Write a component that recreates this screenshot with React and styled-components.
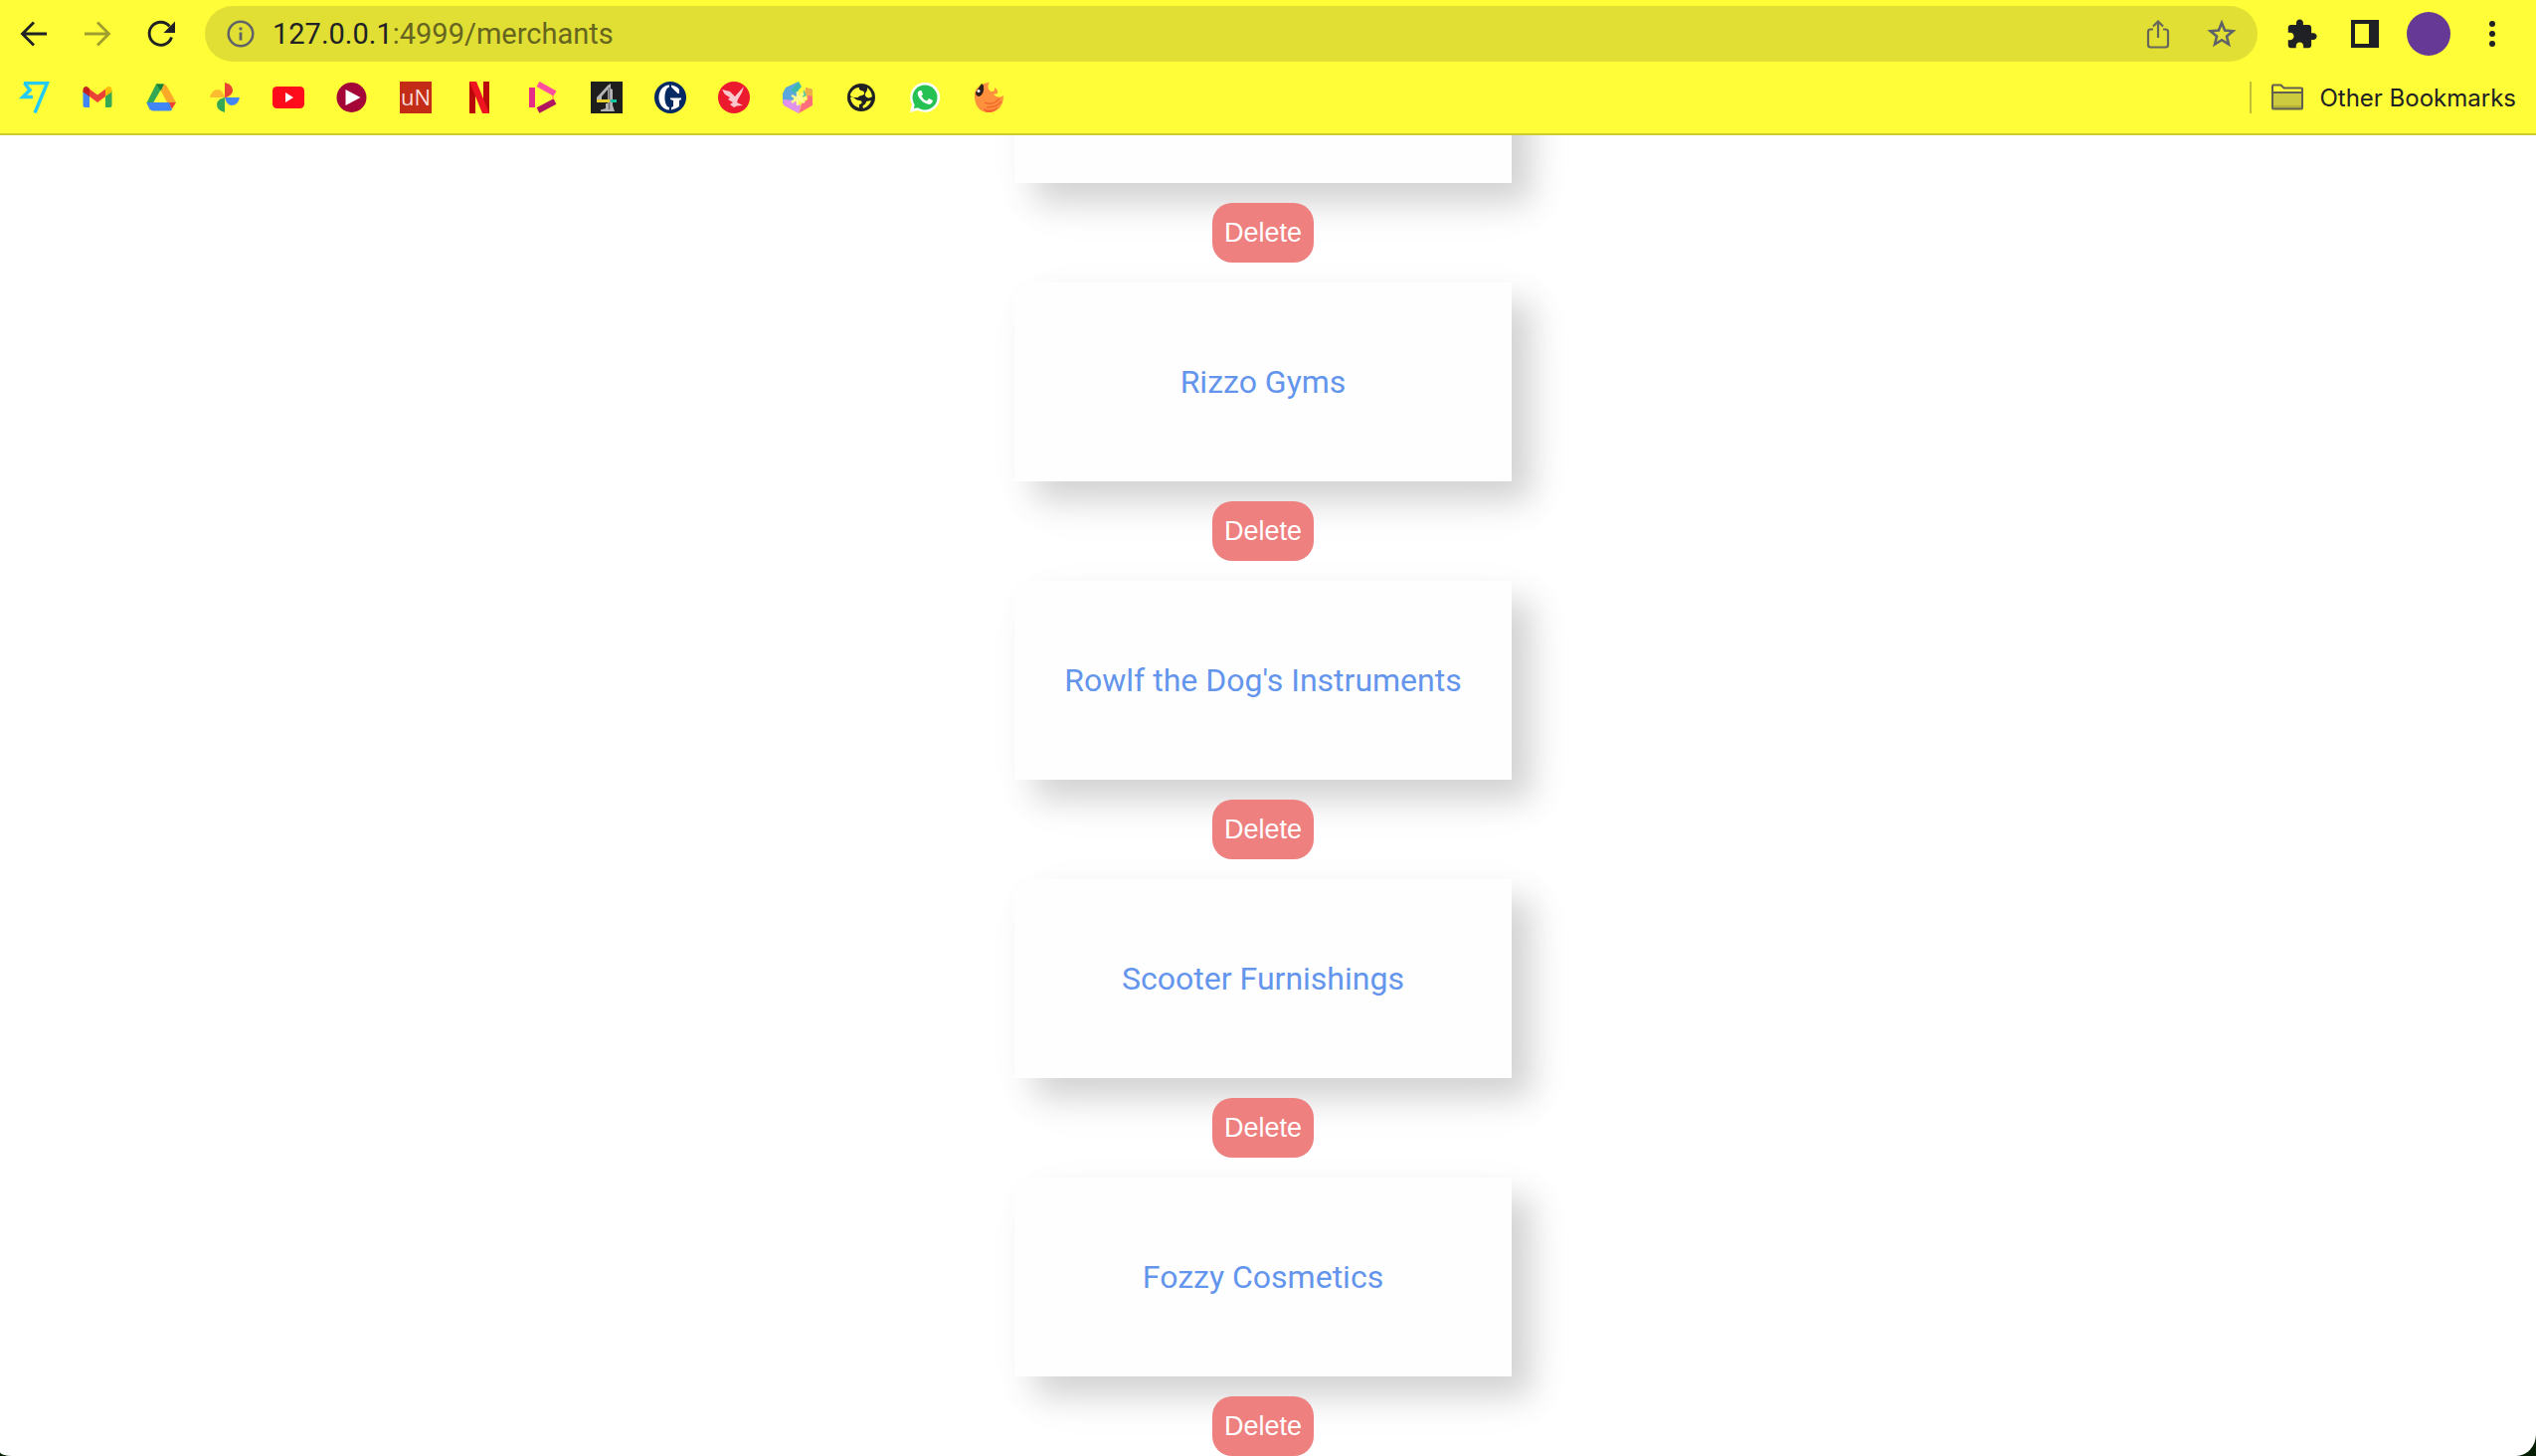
import React from "react";
import styled, { createGlobalStyle } from "styled-components";

const Global = createGlobalStyle`
  * { box-sizing: border-box; }
  body { margin: 0; background: #041f04; font-family: Roboto, "Liberation Sans", sans-serif; }
  button, a { font: inherit; color: inherit; text-decoration: none; }
  svg { display: block; flex: none; }
`;

const Window = styled.div`
  height: 100vh;
  display: flex;
  flex-direction: column;
  overflow: hidden;
  background: #fff;
  border-radius: 0 0 20px 12px / 0 0 22px 4px;
`;

const Chrome = styled.header`
  flex: none;
  background: #fffd38;
  border-bottom: 2px solid #cccb2d;
`;

const Toolbar = styled.div`
  display: flex;
  align-items: center;
  height: 68px;
  padding: 0 28px 0 18px;
`;

const IconButton = styled.button`
  display: grid;
  place-items: center;
  flex: none;
  width: 32px;
  height: 44px;
  padding: 0;
  border: 0;
  background: none;
  color: ${(p) => p.$color || "#202124"};
`;

const NavGroup = styled.nav`
  display: flex;
  gap: 32px;
  margin-right: 28px;
`;

const AddressBar = styled.div`
  flex: 1;
  display: flex;
  align-items: center;
  gap: 16px;
  height: 56px;
  padding: 0 20px;
  border-radius: 28px;
  background: #e1df34;
  color: #5f6368;
`;

const Url = styled.div`
  flex: 1;
  font-size: 29px;
  line-height: 32px;
  color: #66651f;
`;

const Host = styled.span`
  color: #202124;
`;

const AddressActions = styled.div`
  display: flex;
  gap: 32px;
`;

const ToolGroup = styled.div`
  display: flex;
  align-items: center;
  gap: 32px;
  margin-left: 28px;
`;

const Avatar = styled.button`
  width: 44px;
  height: 44px;
  margin: 0 -6px;
  padding: 0;
  border: 0;
  border-radius: 50%;
  background: #673996;
`;

const Bookmarks = styled.nav`
  display: flex;
  align-items: center;
  gap: 32px;
  height: 66px;
  padding: 0 20px 6px 18px;
`;

const Bookmark = styled.a`
  display: block;
  width: 32px;
  height: 32px;
`;

const Folder = styled.button`
  display: flex;
  align-items: center;
  gap: 16px;
  height: 32px;
  margin-left: auto;
  padding: 0 0 0 20px;
  border: 0;
  border-left: 2px solid #c1bf35;
  background: none;
  font-family: Inter, "Liberation Sans", sans-serif;
  font-size: 24px;
  color: #202124;
`;

const Page = styled.main`
  flex: 1;
  min-height: 0;
  overflow: hidden;
  padding-right: 10px;
  display: flex;
  flex-direction: column;
  justify-content: flex-end;
`;

const Merchants = styled.ul`
  list-style: none;
  margin: 0;
  padding: 0;
  display: flex;
  flex-direction: column;
  gap: 20px;
`;

const Merchant = styled.li`
  display: flex;
  flex-direction: column;
  align-items: center;
  gap: 20px;
`;

const Card = styled.a`
  display: grid;
  place-items: center;
  width: 500px;
  height: 200px;
  background: #fefefe;
  box-shadow: 20px 20px 30px rgba(0, 0, 0, 0.15), 20px 20px 60px rgba(0, 0, 0, 0.04);
  font-size: 32px;
  line-height: 40px;
  && { color: #6495ed; }
`;

const DeleteButton = styled.button`
  height: 60px;
  padding: 0 12px;
  border: 0;
  border-radius: 20px;
  background: #ee8080;
  font-family: "Liberation Sans", Arial, sans-serif;
  font-size: 27px;
  && { color: #fff; }
`;

const Icon = ({ children, size = 32, box = "0 0 32 32" }) => (
  <svg width={size} height={size} viewBox={box} fill="none" aria-hidden="true">{children}</svg>
);

const BackIcon = () => (
  <Icon><path d="M29 16H5M16 4.500 4.500 16 16 27.500" stroke="currentColor" strokeWidth="2.800" /></Icon>
);
const ForwardIcon = () => (
  <Icon><path d="M3 16H27M16 4.500 27.500 16 16 27.500" stroke="currentColor" strokeWidth="2.800" /></Icon>
);
const ReloadIcon = () => (
  <Icon>
    <path d="M26.500 19.500A11.500 11.500 0 1 1 24.500 8.500" stroke="currentColor" strokeWidth="2.900" />
    <path d="M30 3.500V15H18.500Z" fill="currentColor" />
  </Icon>
);
const InfoIcon = () => (
  <Icon>
    <circle cx="16" cy="16" r="12.300" stroke="#5f6368" strokeWidth="2.500" />
    <path d="M16 14.500V22.500M16 9.500V12.300" stroke="#5f6368" strokeWidth="2.800" />
  </Icon>
);
const ShareIcon = () => (
  <Icon>
    <path d="M11 11.500H8.500Q6 11.500 6 14V27Q6 29.500 8.500 29.500H23.500Q26 29.500 26 27V14Q26 11.500 23.500 11.500H21M16 20V4M11 8.500 16 3.500 21 8.500" stroke="currentColor" strokeWidth="2.200" />
  </Icon>
);
const StarIcon = () => (
  <Icon>
    <path d="M16 5 19.100 12.600 27.300 13.200 21 18.500 23 26.500 16 22.200 9 26.500 11 18.500 4.700 13.200 12.900 12.600Z" stroke="currentColor" strokeWidth="2.600" />
  </Icon>
);
const PuzzleIcon = () => (
  <Icon size={33} box="0 0 24 24">
    <path fill="currentColor" d="M20.500 11H19V7c0-1.100-.9-2-2-2h-4V3.500C13 2.120 11.880 1 10.500 1S8 2.120 8 3.500V5H4c-1.100 0-1.990.9-1.990 2v3.800H3.500c1.490 0 2.700 1.210 2.700 2.700s-1.210 2.700-2.700 2.700H2V20c0 1.100.9 2 2 2h3.800v-1.500c0-1.490 1.210-2.700 2.700-2.700 1.490 0 2.700 1.210 2.700 2.700V22H17c1.100 0 2-.9 2-2v-4h1.500c1.380 0 2.500-1.120 2.500-2.500S21.880 11 20.500 11z" />
  </Icon>
);
const PanelIcon = () => (
  <Icon><path fillRule="evenodd" fill="currentColor" d="M2 2H30V30H2ZM6 6V26H20V6Z" /></Icon>
);
const DotsIcon = () => (
  <Icon><g fill="currentColor"><circle cx="16" cy="6" r="3" /><circle cx="16" cy="16" r="3" /><circle cx="16" cy="26" r="3" /></g></Icon>
);
const FolderIcon = () => (
  <Icon>
    <path d="M1 27V4.500Q1 3.500 2 3.500H9.500L12.500 6.500H30Q31 6.500 31 7.500V26.500Q31 27.500 30 27.500H2Q1 27.500 1 26.500Z" fill="#fffd38" />
    <path d="M1 11H31V27H1Z" fill="#cccb3f" /><path d="M1 24H31V27H1Z" fill="#b5b33c" />
    <path d="M1 11H31M1 26.500V4.500Q1 3.500 2 3.500H9.500L12.500 6.500H30Q31 6.500 31 7.500V26.500Q31 27.500 30 27.500H2Q1 27.500 1 26.500Z" stroke="#5f6050" strokeWidth="2" />
  </Icon>
);

const bookmarks = [
  ["Wise", <path key="a" d="M6 1.500H29.500L17 31.500M6.500 1.500 12 8.500 5 15.500H15" stroke="#24ccf5" strokeWidth="3.500" />],
  ["Gmail", <g key="a">
    <path d="M1.500 9V24Q1.500 26 3.500 26H8V13Z" fill="#4285f4" /><path d="M30.500 9V24Q30.500 26 28.500 26H24V13Z" fill="#34a853" />
    <path d="M8 7.500 16 13.500 24 7.500V15L16 21 8 15Z" fill="#ea4335" />
    <path d="M1.500 8.500C1.500 5 5 4 7 6.200L8 7V15L1.500 10.500Z" fill="#c5221f" /><path d="M30.500 8.500C30.500 5 27 4 25 6.200L24 7V15L30.500 10.500Z" fill="#fbbc04" />
  </g>],
  ["Drive", <g key="a">
    <path d="M11 2.500H19L8 21.500 4.500 28 1.500 21.500Z" fill="#34a853" /><path d="M11 2.500H19L16 9.500Z" fill="#188038" />
    <path d="M16 9.500 19 2.500Q21 3 22 5L31 21H22Z" fill="#fbaa27" /><path d="M22 21H31L27 27.500Z" fill="#ea4335" />
    <path d="M1.500 21H24L27 28.500Q26 29.500 24 29.500H8Q5.500 29.500 4.500 27.500Z" fill="#4285f4" />
  </g>],
  ["Photos", <g key="a">
    <path d="M16 1Q24 3 24 9Q24 14 16 16.500Z" fill="#ea4335" /><path d="M31 16Q29 24 23 24Q18 24 16 16Z" fill="#4285f4" />
    <path d="M16 31Q8 29 8 23Q8 18 16 16Z" fill="#34a853" /><path d="M1 16Q3 8 9 8Q14 8 16 16Z" fill="#fbbc2d" />
  </g>],
  ["YouTube", <g key="a"><rect y="5" width="32" height="22" rx="4.500" fill="#ff0b1b" /><path d="M13 11V21L21 16Z" fill="#fff" /></g>],
  ["Player", <g key="a"><circle cx="15.500" cy="16" r="15" fill="#a30637" /><path d="M9.500 8V24L24.500 16Z" fill="#fff" /></g>],
  ["unNotes", <g key="a"><rect width="32" height="32" fill="#c32d17" /><text x="1" y="24" fontFamily="Open Sans, sans-serif" fontSize="22" fill="#fbdcd7">uN</text></g>],
  ["Netflix", <g key="a"><path d="M6 0H12V32H6ZM20 0H26V32H20Z" fill="#b9090b" /><path d="M6 0H13L26 32H19Z" fill="#ee1520" /></g>],
  ["Hexagon", <g key="a">
    <path d="M11 2.500 28 12" stroke="#ff4da0" strokeWidth="6" /><path d="M5 6V26" stroke="#e52c87" strokeWidth="6" />
    <path d="M11 29 28 20" stroke="#b0145f" strokeWidth="6" /><path d="M26 14V18" stroke="#ffb63c" strokeWidth="2" />
  </g>],
  ["Channel 4", <g key="a"><rect width="32" height="32" fill="#1e1e1e" />
    <path d="M20 2V7L22 8V24L24 30H10V28.500L15 27V22H17V8L11 15V18H6V16L17 4Z" fill="#b5b5b5" />
    <path d="M18.500 6V28" stroke="#6e6e6e" strokeWidth="1.500" />
    <path d="M6 19.500H19" stroke="#e7d22d" strokeWidth="3" /><path d="M20 19.500H26" stroke="#14c5a0" strokeWidth="3" />
  </g>],
  ["The Guardian", <g key="a"><circle cx="16" cy="16" r="16" fill="#052962" />
    <path d="M15 3.500C1 4 1 28 15 28.500V26C9 25 9 7 15 5.500ZM17 3.500Q23 4.500 25 8V12H23.500L17 5.500ZM16 16.500H27V18L25 19V25Q21 28 17 28.500V26L19 25V19L16 18Z" fill="#fff" />
  </g>],
  ["Independent", <g key="a"><circle cx="16" cy="16" r="16" fill="#ec1a2e" />
    <path d="M4 8 12 10 17 15 26 5 24 11 20 18 19 21 25 24 19 24.500 16 26 12 23 15 21 10 18 12 16 7 13Z" fill="#fbc9cd" />
  </g>],
  ["Brain", <g key="a">
    <path d="M17 0 4 6 1 12V22L9 27 16 16Z" fill="#5aa7dd" /><path d="M24 6 31 8V24L17 32 20 22 26 18Z" fill="#ff6f7b" />
    <path d="M17 0 20 5 14 12 9 9Z" fill="#3db8ae" /><path d="M1 18 13 19 19 24 17 32 2 24Z" fill="#df91ec" />
    <path d="M24 6 31 8V15L23 13Z" fill="#efad4a" /><path d="M22 8 25 14 21 16Z" fill="#57c7a0" />
    <path d="M16 10V24M10 14 23 21M22 12 10 21M12 17H25" stroke="#fffb90" strokeWidth="2.500" />
  </g>],
  ["Globe", <g key="a"><circle cx="16" cy="16" r="14" fill="#202124" />
    <path d="M14 6C13 10 18 8 19 11C20 15 14 13 13 16H9C5 16 4 13 6 11Q9 6 14 6Z" fill="#fffd38" />
    <path d="M26 10C23 9 21 12 22 14C23 17 26 15 27 17Q27 25 17 27C17 24 21 24 20 21C19 18 14 21 13 17H6Q6 24 13 26.500" fill="none" />
    <path d="M5 16C9 15 10 19 14 19C18 19 17 23 14 23V26.500Q6 24 5 16ZM22 6Q26 9 27 15C25 17 21 17 20 14C19 11 23 10 22 6ZM18 27C16 23 21 24 21 20L26 19Q24 25 18 27Z" fill="#fffd38" />
  </g>],
  ["WhatsApp", <g key="a"><path d="M1 31 3 23A15 15 0 1 1 9 29Z" fill="#fff" /><circle cx="16" cy="16" r="12.500" fill="#25c152" /><path d="M5 27 6 21 11 26Z" fill="#25c152" />
    <path d="M11 9Q8 10 9 14Q12 21 20 23Q23 23 24 19L20 17 18 19.500Q14 18 12.500 14.500L14 13 12.500 9Z" fill="#fff" />
  </g>],
  ["Tanuki", <g key="a">
    <path d="M2 12C3 6 9 1 17 1Q14 5 17 9Q19 11 22 9V6Q26 8 25 12L21 13Q26 18 31 14C31 24 26 31 16 31C7 31 1 24 2 12Z" fill="#ff913e" />
    <path d="M11 27Q18 31 26 25 22 31 16 31Q12 31 11 27Z" fill="#f7622d" /><path d="M12 21Q20 25 27 17M14 26Q24 26 29 20" stroke="#f26b2b" strokeWidth="1.500" />
    <path d="M3 11 9 2 11 4Q12 12 7 15Q3 15 3 11Z" fill="#2d2019" /><circle cx="6" cy="9.500" r="1.500" fill="#fff" />
  </g>],
];

const merchants = ["", "Rizzo Gyms", "Rowlf the Dog's Instruments", "Scooter Furnishings", "Fozzy Cosmetics"];

export default function App() {
  return (
    <Window>
      <Global />
      <Chrome>
        <Toolbar>
          <NavGroup aria-label="Navigation">
            <IconButton aria-label="Back"><BackIcon /></IconButton>
            <IconButton aria-label="Forward" $color="#a09f2d"><ForwardIcon /></IconButton>
            <IconButton aria-label="Reload"><ReloadIcon /></IconButton>
          </NavGroup>
          <AddressBar>
            <InfoIcon />
            <Url><Host>127.0.0.1</Host>:4999/merchants</Url>
            <AddressActions>
              <IconButton aria-label="Share" $color="#66665a"><ShareIcon /></IconButton>
              <IconButton aria-label="Bookmark this page" $color="#5f6368"><StarIcon /></IconButton>
            </AddressActions>
          </AddressBar>
          <ToolGroup>
            <IconButton aria-label="Extensions"><PuzzleIcon /></IconButton>
            <IconButton aria-label="Side panel"><PanelIcon /></IconButton>
            <Avatar aria-label="Profile" />
            <IconButton aria-label="Menu"><DotsIcon /></IconButton>
          </ToolGroup>
        </Toolbar>
        <Bookmarks aria-label="Bookmarks">
          {bookmarks.map(([name, art]) => (
            <Bookmark key={name} href="#" aria-label={name}><Icon>{art}</Icon></Bookmark>
          ))}
          <Folder><FolderIcon />Other Bookmarks</Folder>
        </Bookmarks>
      </Chrome>
      <Page>
        <Merchants>
          {merchants.map((name, i) => (
            <Merchant key={i}>
              <Card href="#">{name}</Card>
              <DeleteButton>Delete</DeleteButton>
            </Merchant>
          ))}
        </Merchants>
      </Page>
    </Window>
  );
}
